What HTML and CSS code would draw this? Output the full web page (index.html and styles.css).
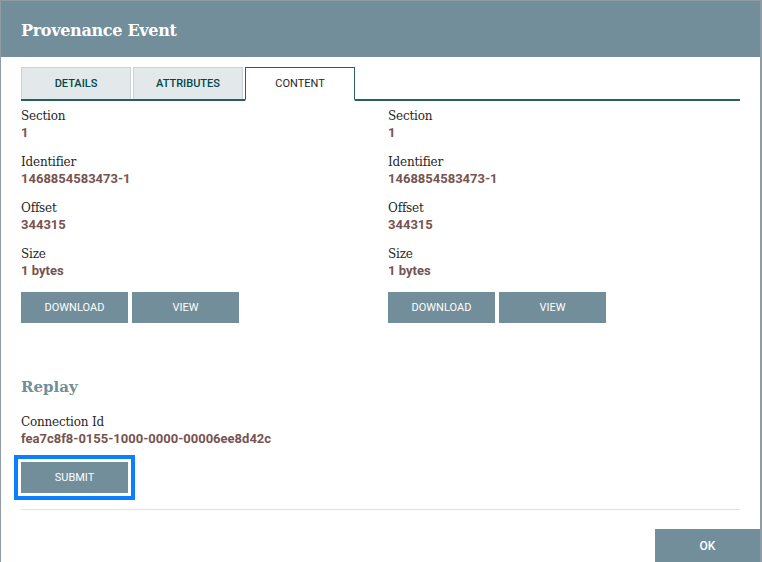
FILE: index.html
```html
<!DOCTYPE html>
<html>
<head>
<meta charset="utf-8">
<link rel="stylesheet" href="styles.css">
</head>
<body>
<div class="dialog">
  <div class="header"><h1 class="title">Provenance Event</h1></div>
  <div class="body">
    <div class="tabs">
      <div class="tab">DETAILS</div>
      <div class="tab">ATTRIBUTES</div>
      <div class="tab active">CONTENT</div>
    </div>
    <div class="panes">
      <div class="pane">
        <div class="field"><div class="label">Section</div><div class="value">1</div></div>
        <div class="field"><div class="label">Identifier</div><div class="value">1468854583473-1</div></div>
        <div class="field"><div class="label">Offset</div><div class="value">344315</div></div>
        <div class="field"><div class="label">Size</div><div class="value">1 bytes</div></div>
        <div class="btns"><div class="btn">DOWNLOAD</div><div class="btn">VIEW</div></div>
      </div>
      <div class="pane">
        <div class="field"><div class="label">Section</div><div class="value">1</div></div>
        <div class="field"><div class="label">Identifier</div><div class="value">1468854583473-1</div></div>
        <div class="field"><div class="label">Offset</div><div class="value">344315</div></div>
        <div class="field"><div class="label">Size</div><div class="value">1 bytes</div></div>
        <div class="btns"><div class="btn">DOWNLOAD</div><div class="btn">VIEW</div></div>
      </div>
    </div>
    <h2 class="replay">Replay</h2>
    <div class="field"><div class="label">Connection Id</div><div class="value">fea7c8f8-0155-1000-0000-00006ee8d42c</div></div>
    <div class="focus"><div class="btn">SUBMIT</div></div>
    <div class="sep"></div>
  </div>
  <div class="footer"><div class="ok">OK</div></div>
</div>
</body>
</html>
```
FILE: styles.css
```css
html, body {
  margin: 0;
  padding: 0;
}
body {
  background: #8f9ca3;
  width: 762px;
  height: 562px;
  overflow: hidden;
  font-family: Roboto, "Liberation Sans", sans-serif;
}
.dialog {
  margin: 1px 1px 0 1px;
  width: 759px;
  height: 561px;
  background: #fff;
  display: flex;
  flex-direction: column;
}
.header {
  height: 56px;
  background: #728e9b;
  display: flex;
  align-items: center;
  padding-left: 20px;
  flex-shrink: 0;
}
.title {
  margin: 0;
  color: #fff;
  font-family: "DejaVu Serif", serif;
  font-size: 16px;
  font-weight: bold;
  letter-spacing: -0.3px;
  position: relative;
  top: 1px;
}
.body {
  padding: 10px 20px 0 20px;
  flex: 1;
}
.tabs {
  display: flex;
  gap: 2px;
  border-bottom: 2px solid #2a5f62;
  height: 32px;
}
.tab {
  width: 110px;
  height: 32px;
  margin-bottom: -2px;
  box-sizing: border-box;
  background: #e3e8eb;
  border: 1px solid #c9d2d6;
  border-bottom: none;
  display: flex;
  align-items: center;
  justify-content: center;
  font-size: 11px;
  font-weight: 500;
  color: #004849;
}
.tab.active {
  height: 34px;
  background: #fff;
  border: 1px solid #2a5f62;
  border-bottom: 2px solid #fff;
  color: #262626;
  font-weight: 400;
}
.panes {
  display: grid;
  grid-template-columns: 367px 1fr;
  padding-top: 7px;
}
.field {
  margin-bottom: 13px;
}
.label {
  font-family: "DejaVu Serif", serif;
  font-size: 12px;
  color: #262626;
  line-height: 16px;
  letter-spacing: -0.2px;
}
.value {
  font-size: 13px;
  font-weight: 700;
  color: #775351;
  line-height: 17px;
}
.btns {
  display: flex;
  gap: 4px;
  margin-top: 2px;
}
.btn {
  width: 107px;
  height: 31px;
  background: #728e9b;
  color: #fff;
  font-size: 11px;
  display: flex;
  align-items: center;
  justify-content: center;
}
.replay {
  margin: 54px 0 0 0;
  font-family: "DejaVu Serif", serif;
  font-size: 15px;
  font-weight: bold;
  color: #728e9b;
  line-height: 20px;
}
.replay + .field {
  margin-top: 17px;
  margin-bottom: 0;
}
.focus {
  display: inline-block;
  margin-top: 8px;
  margin-left: -7px;
  border: 4px solid #0a7fff;
  padding: 3px;
}
.sep {
  height: 1px;
  background: #dde4e8;
  margin-top: 9px;
}
.footer {
  display: flex;
  justify-content: flex-end;
  height: 33px;
  margin-top: -1px;
  flex-shrink: 0;
}
.ok {
  width: 105px;
  height: 33px;
  background: #728e9b;
  color: #fff;
  font-size: 12px;
  font-weight: 500;
  display: flex;
  align-items: center;
  justify-content: center;
}
```
